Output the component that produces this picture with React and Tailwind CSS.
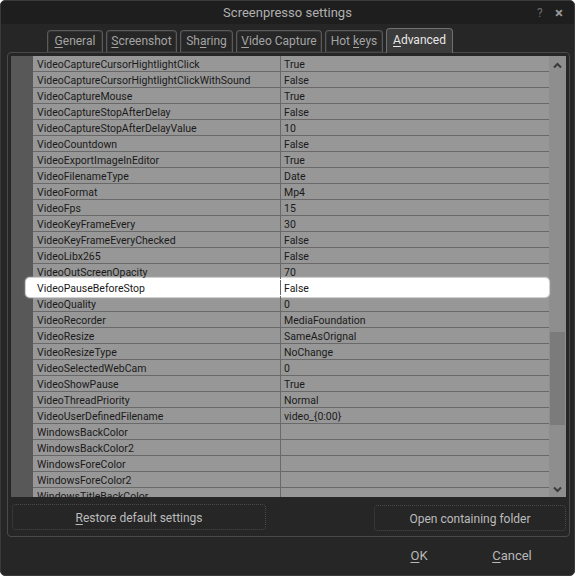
import React from "react";

const rows = [
  ["VideoCaptureCursorHightlightClick", "True"],
  ["VideoCaptureCursorHightlightClickWithSound", "False"],
  ["VideoCaptureMouse", "True"],
  ["VideoCaptureStopAfterDelay", "False"],
  ["VideoCaptureStopAfterDelayValue", "10"],
  ["VideoCountdown", "False"],
  ["VideoExportImageInEditor", "True"],
  ["VideoFilenameType", "Date"],
  ["VideoFormat", "Mp4"],
  ["VideoFps", "15"],
  ["VideoKeyFrameEvery", "30"],
  ["VideoKeyFrameEveryChecked", "False"],
  ["VideoLibx265", "False"],
  ["VideoOutScreenOpacity", "70"],
  ["VideoPauseBeforeStop", "False"],
  ["VideoQuality", "0"],
  ["VideoRecorder", "MediaFoundation"],
  ["VideoResize", "SameAsOrignal"],
  ["VideoResizeType", "NoChange"],
  ["VideoSelectedWebCam", "0"],
  ["VideoShowPause", "True"],
  ["VideoThreadPriority", "Normal"],
  ["VideoUserDefinedFilename", "video_{0:00}"],
  ["WindowsBackColor", ""],
  ["WindowsBackColor2", ""],
  ["WindowsForeColor", ""],
  ["WindowsForeColor2", ""],
  ["WindowsTitleBackColor", ""],
];

const tabs = [
  { pre: "", key: "G", post: "eneral", w: "w-[56px]" },
  { pre: "", key: "S", post: "creenshot", w: "w-[71px]" },
  { pre: "Sh", key: "a", post: "ring", w: "w-[53px]" },
  { pre: "", key: "V", post: "ideo Capture", w: "w-[86px]" },
  { pre: "Hot\u00a0", key: "k", post: "eys", w: "w-[58px]" },
];

export default function App() {
  return (
    <div
      className="w-[575px] h-[576px] bg-[#262626] border border-[#3a3a3a] rounded-[5px] overflow-hidden flex flex-col relative"
      style={{ fontFamily: "Roboto, 'Liberation Sans', sans-serif" }}
    >
      {/* title bar */}
      <div className="h-[23px] bg-[#1e1e1e] flex items-center justify-center relative shrink-0">
        <span className="text-[13px] text-[#b0b0b0]">Screenpresso settings</span>
        <span className="absolute left-[536px] top-[3px] text-[12px] text-[#6a6a6a]">?</span>
        <span className="absolute left-[554px] top-[1px] text-[15px] text-[#9a9a9a] font-bold">×</span>
      </div>

      {/* tabs */}
      <div className="h-[28px] flex items-end pl-[46px] gap-[3px] shrink-0 relative z-10">
        {tabs.map((t, i) => (
          <div
            key={i}
            className={`${t.w} h-[22px] border border-b-0 border-[#5a5a5a] rounded-t-[4px] bg-[#262626] flex items-center justify-center text-[12px] text-[#a4a4a4] pb-[1px] shadow-[inset_0_0_0_1px_#333] whitespace-pre`}
          >
            {t.pre}
            <span className="underline underline-offset-2">{t.key}</span>
            {t.post}
          </div>
        ))}
        <div className="w-[67px] h-[25px] mb-[-1px] border border-b-0 border-[#707070] rounded-t-[4px] bg-[#3b3b3b] flex items-center justify-center text-[12px] text-[#e8e8e8] pb-[3px]">
          <span className="underline underline-offset-2">A</span>dvanced
        </div>
      </div>

      {/* panel */}
      <div className="ml-[6px] w-[563px] h-[485px] border border-[#4a4a4a] rounded-[4px] flex flex-col px-[3px] pt-[3px] shrink-0">
        <div className="h-[441px] flex overflow-hidden">
          <div className="w-[22px] bg-[#585858] shrink-0" />
          <div className="w-[516px] bg-[#979797] relative">
            {rows.map(([k, v], i) => {
              const sel = i === 14;
              return (
                <div
                  key={i}
                  className="h-[16px] border-b border-[#696969] flex relative text-[10.5px] text-[#1a1a1a] leading-[15px]"
                >
                  {sel && (
                    <div className="absolute left-[-7px] right-0 top-[-2px] bottom-[-2px] bg-white rounded-[4px] shadow-[0_0_0_1px_#cfcfcf,0_0_2px_1px_#b0b0b0] z-10" />
                  )}
                  <div className="w-[248px] border-r border-[#696969] pl-[4px] pt-[1px] whitespace-nowrap overflow-hidden relative z-20">
                    {k}
                  </div>
                  <div className="flex-1 pl-[3px] pt-[1px] whitespace-nowrap overflow-hidden relative z-20">{v}</div>
                </div>
              );
            })}
          </div>
          {/* scrollbar */}
          <div className="w-[17px] bg-[#8e8e8e] flex flex-col items-center shrink-0 relative">
            <svg width="9" height="7" viewBox="0 0 9 7" className="mt-[6px]">
              <path d="M1 5.5 L4.5 2 L8 5.5" stroke="#3a3a3a" strokeWidth="2" fill="none" />
            </svg>
            <div className="absolute left-[1px] right-[1px] top-[276px] h-[93px] bg-[#7b7b7b]" />
            <div className="flex-1" />
            <svg width="9" height="7" viewBox="0 0 9 7" className="mb-[4px]">
              <path d="M1 1.5 L4.5 5 L8 1.5" stroke="#3a3a3a" strokeWidth="2" fill="none" />
            </svg>
          </div>
        </div>

        <div className="mt-[7px] h-[26px] flex items-center">
          <div className="ml-[1px] w-[254px] h-[26px] border border-dotted border-[#4a4a4a] rounded-[4px] flex items-center justify-center text-[12px] text-[#bcbcbc] pt-[1px]">
            <span className="underline underline-offset-2">R</span>estore default settings
          </div>
          <div className="ml-auto w-[192px] h-[26px] mt-[2px] border border-dotted border-[#4a4a4a] rounded-[4px] flex items-center justify-center text-[12px] text-[#bcbcbc] pt-[1px]">
            Open containing folder
          </div>
        </div>
      </div>

      {/* footer */}
      <div className="flex-1 flex items-center pl-[378px] pb-[1px]">
        <div className="w-[80px] text-center text-[13px] text-[#b8b8b8]">
          <span className="underline underline-offset-2">O</span>K
        </div>
        <div className="ml-[13px] w-[80px] text-center text-[13px] text-[#b8b8b8]">
          <span className="underline underline-offset-2">C</span>ancel
        </div>
      </div>
    </div>
  );
}
